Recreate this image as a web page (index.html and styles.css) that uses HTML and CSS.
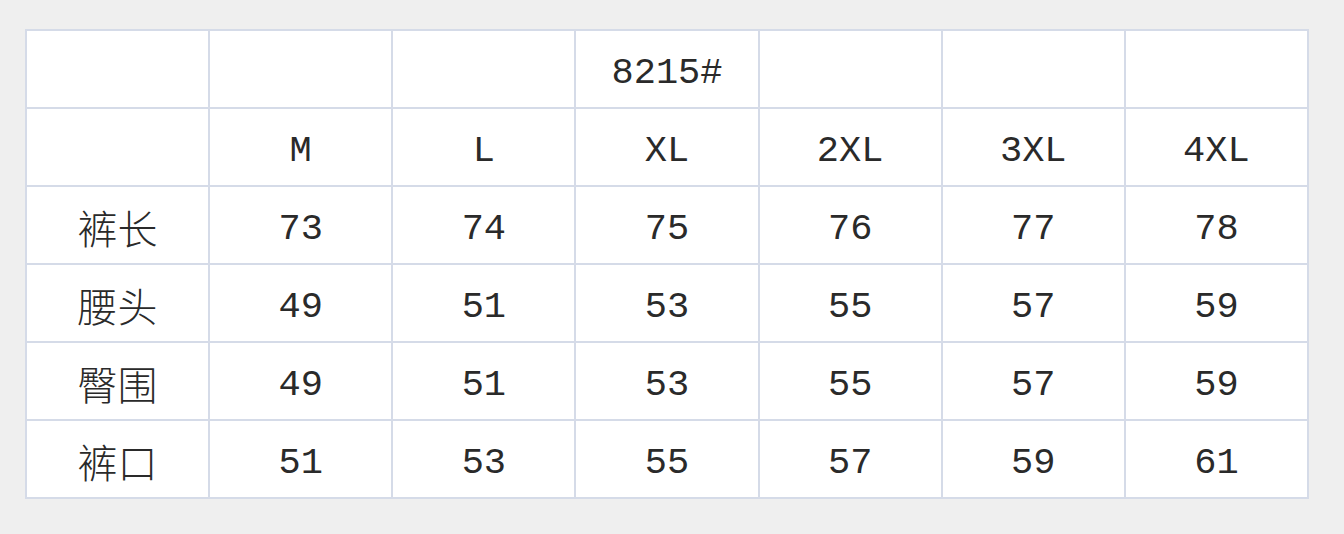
FILE: index.html
```html
<!DOCTYPE html>
<html lang="zh">
<head>
<meta charset="utf-8">
<title>8215# 尺码表</title>
<link rel="stylesheet" href="styles.css">
</head>
<body>
<table class="size-table">
  <tr><td></td><td></td><td></td><td>8215#</td><td></td><td></td><td></td></tr>
  <tr><td></td><td>M</td><td>L</td><td>XL</td><td>2XL</td><td>3XL</td><td>4XL</td></tr>
  <tr><td class="label">裤长</td><td>73</td><td>74</td><td>75</td><td>76</td><td>77</td><td>78</td></tr>
  <tr><td class="label">腰头</td><td>49</td><td>51</td><td>53</td><td>55</td><td>57</td><td>59</td></tr>
  <tr><td class="label">臀围</td><td>49</td><td>51</td><td>53</td><td>55</td><td>57</td><td>59</td></tr>
  <tr><td class="label">裤口</td><td>51</td><td>53</td><td>55</td><td>57</td><td>59</td><td>61</td></tr>
</table>
</body>
</html>
```
FILE: styles.css
```css
html, body {
  margin: 0;
  background: #efefef;
}
body {
  padding: 29px 0 0 25px;
}
.size-table {
  border-collapse: collapse;
  table-layout: fixed;
  width: 1284px;
  background: #ffffff;
  border: 2px solid #d5dbe8;
}
.size-table td {
  width: 183px;
  height: 78px;
  padding: 8px 0 0 0;
  box-sizing: border-box;
  border: 2px solid #d5dbe8;
  text-align: center;
  vertical-align: middle;
  font-family: "Liberation Mono", "Noto Sans CJK SC", monospace;
  font-size: 37px;
  color: #2a2a2a;
}
.size-table td.label {
  font-family: "Noto Sans CJK SC", sans-serif;
  font-weight: 300;
  font-size: 40px;
  padding-top: 4px;
}
```
